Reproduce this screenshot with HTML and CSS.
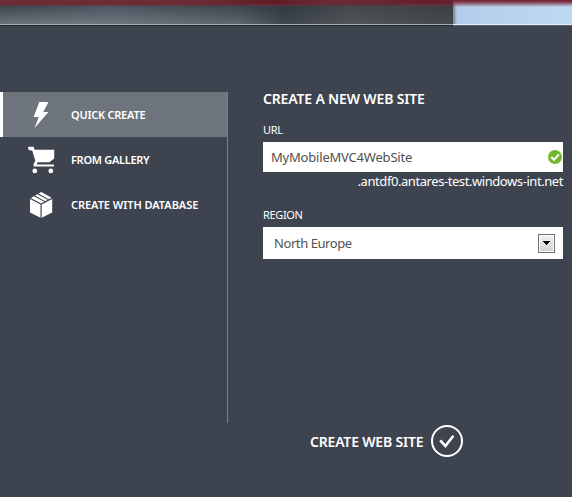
FILE: index.html
```html
<!DOCTYPE html>
<html lang="en">
<head>
<meta charset="utf-8">
<title>Create a new web site</title>
<link rel="stylesheet" href="styles.css">
</head>
<body>
<header class="backdrop"><div class="backdrop-left"></div><div class="backdrop-right"></div></header>
<main class="drawer">
  <nav class="modes">
    <a class="mode active">
      <svg class="mode-icon" viewBox="0 0 30 30"><path d="M11.3 2H20.5L15.3 12H20.5L6.5 28L10.8 17H5.6Z"/></svg>
      <span class="t-quick">QUICK CREATE</span>
    </a>
    <a class="mode">
      <svg class="mode-icon" viewBox="0 0 30 30"><path d="M0.2 1.7H5.6L6.6 4.7H26.2V13.6L21.4 17.2H9.6L8.8 19.4H26V21.6H5.6V19L7.3 15.8L4.2 5.4H2.6L0.2 4.6Z"/><circle cx="6.8" cy="25.9" r="2.4"/><circle cx="22.8" cy="25.9" r="2.4"/></svg>
      <span class="t-gallery">FROM GALLERY</span>
    </a>
    <a class="mode">
      <svg class="mode-icon" viewBox="0 0 30 30"><path d="M2 9.1L12.5 14.4V27.8L2 22.6ZM13.7 14.4L24.2 9.1V22.6L13.7 27.8ZM2.8 7.9L5.9 6.2L16.2 11.8L13.1 13.4ZM6.9 5.6L9.3 4.3L19.7 9.8L17.2 11.2ZM10.4 3.6L13.3 2L23.6 7.8L20.8 9.3Z"/></svg>
      <span class="t-database">CREATE WITH DATABASE</span>
    </a>
  </nav>
  <section class="form">
    <h1>CREATE A NEW WEB SITE</h1>
    <div class="label t-url">URL</div>
    <div class="field url-field">
      <span class="t-name">MyMobileMVC4WebSite</span>
      <svg class="valid" viewBox="0 0 14 14"><circle cx="7" cy="7" r="7"/><path d="M3.3 7L6 9.8L10.8 4.4"/></svg>
    </div>
    <div class="suffix"><span class="t-suffix">.antdf0.antares-test.windows-int.net</span></div>
    <div class="label t-region">REGION</div>
    <div class="field region-field">
      <span class="t-europe">North Europe</span>
      <span class="drop"><svg viewBox="0 0 7 4" shape-rendering="crispEdges"><path d="M0 0H7V1H6V2H5V3H4V4H3V3H2V2H1V1H0Z"/></svg></span>
    </div>
    <div class="submit">
      <span class="t-submit">CREATE WEB SITE</span>
      <svg class="submit-icon" viewBox="0 0 32 32"><circle cx="16" cy="16" r="15"/><path d="M9.2 15.4L14.4 21L22.4 10.7"/></svg>
    </div>
  </section>
</main>
</body>
</html>
```
FILE: styles.css
```css
* { box-sizing: border-box; }
body {
  margin: 0;
  width: 572px;
  height: 497px;
  overflow: hidden;
  background: #3e444f;
  color: #fff;
  font-family: "Noto Sans", "Open Sans", sans-serif;
}
.backdrop { display: flex; height: 26px; }
.backdrop-left {
  width: 453px;
  background:
    linear-gradient(#a4acb0, #a4acb0) 0 24px / 100% 1px no-repeat,
    linear-gradient(#24282e, #24282e) 0 25px / 100% 1px no-repeat,
    linear-gradient(90deg, rgba(90, 15, 28, 0) 200px, rgba(90, 15, 28, .6) 275px, rgba(90, 15, 28, 0) 330px, rgba(90, 15, 28, .4) 430px) 0 0 / 100% 4px no-repeat,
    linear-gradient(#6d2d38 0, #6a2b36 4px, rgba(80, 42, 52, 0) 7px),
    linear-gradient(90deg, rgba(118, 132, 143, 0) 0, rgba(118, 132, 143, .3) 110px, rgba(60, 66, 74, .25) 240px, rgba(44, 51, 59, .7) 285px, rgba(70, 75, 77, .75) 350px, rgba(58, 62, 65, .8) 453px),
    linear-gradient(#3c444e 6px, #6b7278 24px);
}
.backdrop-right {
  flex: 1;
  background:
    linear-gradient(#e1edf6, #e1edf6) 0 24px / 100% 1px no-repeat,
    linear-gradient(#59636d, #59636d) 0 25px / 100% 1px no-repeat,
    linear-gradient(#70202d 0, #813b4b 2px, rgba(184, 207, 232, 0) 7px),
    linear-gradient(90deg, #70818f 0, #b2cde9 4px, #bdd9f4 100%);
}
.drawer { display: flex; height: 471px; padding-top: 66px; }
.modes { width: 228px; height: 331px; border-right: 1px solid #7b8188; }
.mode {
  display: flex;
  align-items: center;
  height: 45px;
  padding-left: 28px;
  font-size: 11px;
  font-weight: 600;
  line-height: 15px;
}
.mode.active { padding-left: 25px; border-left: 3px solid #fff; background: #6e747b; }
.mode-icon { width: 30px; height: 30px; margin-right: 13px; fill: #fff; }
.t-quick { letter-spacing: -.24px; }
.t-gallery { letter-spacing: -.3px; }
.t-database { letter-spacing: -.05px; }
.form { width: 300px; margin-left: 35px; }
h1 {
  margin: -3px 0 0;
  font-size: 14px;
  line-height: 20px;
  font-weight: 600;
  letter-spacing: -.17px;
  white-space: nowrap;
}
.label { font-size: 11px; line-height: 15px; letter-spacing: -.35px; }
.t-url { margin-top: 13px; }
.field {
  display: flex;
  align-items: center;
  justify-content: space-between;
  background: #fff;
  color: #505050;
  font-size: 13px;
  line-height: 18px;
}
.url-field { height: 30px; margin-top: 5px; padding: 0 1px 0 8px; }
.t-name { letter-spacing: -.2px; }
.valid { width: 14px; height: 14px; fill: #70b92c; }
.valid path { fill: none; stroke: #fff; stroke-width: 2; }
.suffix { height: 18px; font-size: 13px; line-height: 18px; text-align: right; white-space: nowrap; }
.t-suffix { letter-spacing: -.43px; }
.t-region { margin-top: 17px; }
.region-field { height: 32px; margin-top: 5px; padding: 0 8px 0 11px; }
.t-europe { letter-spacing: -.42px; }
.drop {
  display: flex;
  align-items: center;
  justify-content: center;
  width: 17px;
  height: 19px;
  border: 1px solid #707070;
  box-shadow: inset 0 0 0 1px #fff;
  background: linear-gradient(#f2f2f2, #ddd 60%, #cfcfcf);
}
.drop svg { width: 7px; height: 4px; fill: #000; }
.submit {
  display: flex;
  align-items: center;
  justify-content: space-between;
  width: 153px;
  height: 32px;
  margin: 166px 0 0 47px;
  font-size: 14px;
  font-weight: 600;
  white-space: nowrap;
}
.t-submit { letter-spacing: -.2px; }
.submit-icon { width: 32px; height: 32px; fill: none; stroke: #fff; stroke-width: 2; }
.submit-icon path { stroke-width: 2.6; }
```
